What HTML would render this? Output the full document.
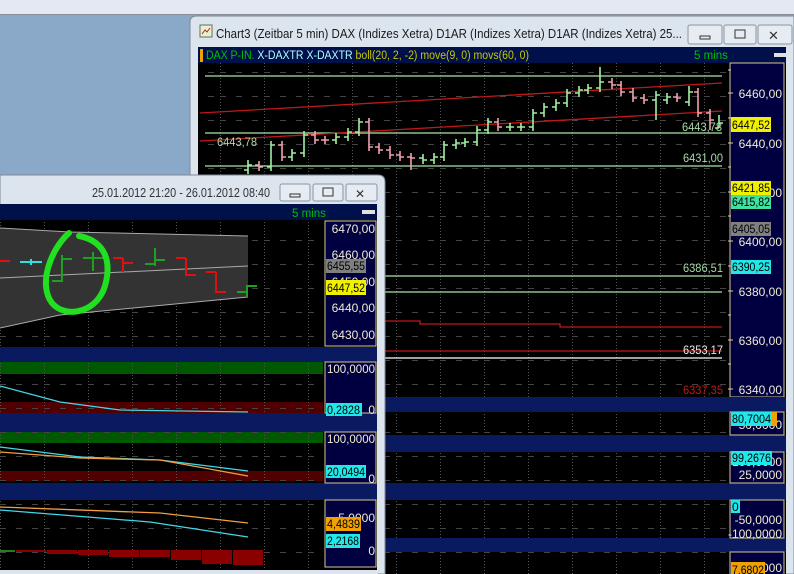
<!DOCTYPE html>
<html><head><meta charset="utf-8"><style>
html,body{margin:0;padding:0;width:794px;height:574px;overflow:hidden;background:#8aa8c8}
svg{display:block;font-family:"Liberation Sans",sans-serif}
</style></head><body>
<svg width="794" height="574" viewBox="0 0 794 574" xmlns="http://www.w3.org/2000/svg">
<defs>
<pattern id="g" x="0" y="0" width="44" height="24" patternUnits="userSpaceOnUse">
<line x1="0.5" y1="0" x2="0.5" y2="24" stroke="#555" stroke-dasharray="1,2"/>
<line x1="0" y1="0.5" x2="44" y2="0.5" stroke="#444" stroke-dasharray="6,10"/>
</pattern>
</defs>
<rect x="0" y="0" width="794" height="14" fill="#e4e8f2"/>
<rect x="0" y="14" width="794" height="1" fill="#8a8e96"/>
<rect x="0" y="15" width="794" height="559" fill="#8aa8c8"/>

<!-- MAIN WINDOW -->
<path d="M190,574 V22 Q190,16 197,16 H794 V574 Z" fill="#dce4ee" stroke="#7d8a98"/>
<rect x="200" y="25" width="12" height="12" fill="#e8f0d0" stroke="#607060"/>
<path d="M202,34 l3,-4 l2,2 l3,-4" stroke="#c02020" fill="none"/>
<text x="216" y="38" font-size="12.5" fill="#1a1a1a" textLength="466" lengthAdjust="spacingAndGlyphs">Chart3 (Zeitbar 5 min)  DAX (Indizes Xetra) D1AR (Indizes Xetra) D1AR (Indizes Xetra) 25...</text>
<rect x="688" y="25" width="34" height="19" rx="2" fill="#e6ecf2" stroke="#8a96a4"/>
<rect x="700" y="36" width="10" height="3" fill="none" stroke="#333"/>
<rect x="724" y="25" width="32" height="19" rx="2" fill="#e6ecf2" stroke="#8a96a4"/>
<rect x="735" y="30" width="10" height="8" fill="none" stroke="#333"/>
<rect x="758" y="25" width="34" height="19" rx="2" fill="#e6ecf2" stroke="#8a96a4"/>
<text x="768" y="40" font-size="13" fill="#333">✕</text>

<rect x="198" y="47" width="588" height="527" fill="#000"/>
<rect x="198" y="47" width="588" height="16" fill="#00104a"/>
<rect x="200" y="49" width="3" height="13" fill="#f0a000"/>
<text x="206" y="59" font-size="11.5" textLength="323" lengthAdjust="spacingAndGlyphs"><tspan fill="#00c000">DAX P-IN. </tspan><tspan fill="#b0ffff">X-DAXTR X-DAXTR </tspan><tspan fill="#c8c800">boll(20, 2, -2) move(9, 0) movs(60, 0)</tspan></text>
<text x="694" y="59" font-size="11.5" fill="#00c000">5 mins</text>
<rect x="774" y="53" width="12" height="4" fill="#e0e0e0"/>

<rect x="198" y="63" width="532" height="334" fill="url(#g)"/>
<g stroke-width="1.3" fill="none">
<line x1="205" y1="76" x2="722" y2="76" stroke="#a8e8a8"/>
<line x1="205" y1="133" x2="722" y2="133" stroke="#a8e8a8"/>
<line x1="205" y1="166" x2="722" y2="166" stroke="#a8e8a8"/>
<line x1="200" y1="113" x2="722" y2="83" stroke="#c01818"/>
<line x1="200" y1="141" x2="722" y2="111" stroke="#c01818"/>
<line x1="200" y1="276" x2="722" y2="276" stroke="#a8e8a8"/>
<line x1="200" y1="292" x2="722" y2="292" stroke="#a8e8a8"/>
<path d="M200,321 H420 V324 H560 V327 H722" stroke="#c01818"/>
<line x1="200" y1="351" x2="722" y2="351" stroke="#c01818"/>
<line x1="200" y1="358" x2="722" y2="358" stroke="#fff"/>
</g>
<g stroke-width="1.6" fill="none">
<path stroke="#a0f0a0" d="M248,160V174M244,170H248M248,165H252 M271,141V171M267,167H271M271,145H275 M292,149V161M288,157H292M292,153H296 M304,131V157M300,153H304M304,135H308 M336,133V144M332,140H336M336,137H340 M348,128V141M344,137H348M348,132H352 M359,118V136M355,132H359M359,122H363 M423,154V164M419,158H423M423,160H427 M434,153V164M430,160H434M434,157H438 M444,141V161M440,157H444M444,145H448 M456,139V149M452,145H456M456,143H460 M465,138V147M461,143H465M465,142H469 M477,126V146M473,142H477M477,130H481 M488,118V134M484,130H488M488,122H492 M510,123V131M506,127H510M510,127H514 M521,123V131M517,127H521M521,127H525 M533,109V131M529,127H533M533,113H537 M544,103V117M540,113H544M544,107H548 M556,99V111M552,107H556M556,103H560 M567,89V107M563,103H567M567,93H571 M579,86V97M575,93H579M579,90H583 M588,84V94M584,90H588M588,88H592 M600,67V92M596,88H600M600,82H604 M656,91V120M652,100H656M656,95H660 M667,93V104M663,100H667M667,97H671 M689,86V106M685,102H689M689,92H693 M719,115V128M715,128H719M719,123H723"/>
<path stroke="#f0a0b0" d="M259,161V171M255,165H259M259,167H263 M282,141V161M278,145H282M282,157H286 M315,131V144M311,135H315M315,140H319 M325,136V144M321,140H325M325,140H329 M369,118V151M365,122H369M369,147H373 M379,143V154M375,147H379M379,150H383 M390,146V159M386,150H390M390,155H394 M400,151V161M396,155H400M400,157H404 M411,153V170M407,157H411M411,158H415 M498,118V131M494,122H498M498,127H502 M612,78V89M608,82H612M612,85H616 M621,81V96M617,85H621M621,92H625 M633,88V102M629,92H633M633,98H637 M644,94V104M640,98H644M644,100H648 M677,93V102M673,97H677M677,98H681 M698,88V117M694,92H698M698,113H702 M710,109V130M706,113H710M710,120H714"/>
</g>
<g font-size="11.5" fill="#a8d8a8">
<text x="217" y="146" textLength="40" lengthAdjust="spacingAndGlyphs">6443,78</text>
<text x="682" y="131" textLength="40" lengthAdjust="spacingAndGlyphs">6443,78</text>
<text x="683" y="162" textLength="40" lengthAdjust="spacingAndGlyphs">6431,00</text>
<text x="683" y="272" textLength="40" lengthAdjust="spacingAndGlyphs">6386,51</text>
<text x="683" y="354" fill="#e8e8e8" textLength="40" lengthAdjust="spacingAndGlyphs">6353,17</text>
<text x="683" y="394" fill="#c01818" textLength="40" lengthAdjust="spacingAndGlyphs">6337,35</text>
</g>
<rect x="730" y="63" width="54" height="334" fill="#000040" stroke="#d8c890"/>
<g stroke="#e0d090"><path d="M728,70h3M728,93h5M728,118h3M728,143h5M728,167h3M728,192h5M728,216h3M728,241h5M728,266h3M728,291h5M728,315h3M728,340h5M728,364h3M728,389h5"/></g>
<g font-size="12" fill="#f0ead0" text-anchor="end">
<text x="782" y="98">6460,00</text><text x="782" y="148">6440,00</text><text x="782" y="197">6420,00</text>
<text x="782" y="246">6400,00</text><text x="782" y="296">6380,00</text><text x="782" y="345">6360,00</text><text x="782" y="394">6340,00</text>
</g>
<g font-size="12">
<rect x="731" y="117" width="40" height="15" fill="#f0f000"/><text x="732" y="129" textLength="38" lengthAdjust="spacingAndGlyphs">6447,52</text>
<rect x="731" y="181" width="40" height="14" fill="#f0f000"/><text x="732" y="192" textLength="38" lengthAdjust="spacingAndGlyphs">6421,85</text>
<rect x="731" y="195" width="40" height="14" fill="#40e0a0"/><text x="732" y="206" textLength="38" lengthAdjust="spacingAndGlyphs">6415,82</text>
<rect x="731" y="222" width="40" height="14" fill="#808080"/><text x="732" y="233" textLength="38" lengthAdjust="spacingAndGlyphs">6405,05</text>
<rect x="731" y="260" width="40" height="14" fill="#20e8e8"/><text x="732" y="271" textLength="38" lengthAdjust="spacingAndGlyphs">6390,25</text>
</g>
<rect x="198" y="397" width="588" height="15" fill="#0a1a60"/>
<rect x="198" y="435" width="588" height="17" fill="#0a1a60"/>
<rect x="198" y="483" width="588" height="17" fill="#0a1a60"/>
<rect x="198" y="538" width="588" height="14" fill="#0a1a60"/>
<rect x="198" y="412" width="532" height="23" fill="url(#g)"/>
<rect x="198" y="452" width="532" height="31" fill="url(#g)"/>
<rect x="198" y="500" width="532" height="38" fill="url(#g)"/>
<rect x="198" y="552" width="532" height="22" fill="url(#g)"/>
<g fill="#000040" stroke="#d8c890">
<rect x="730" y="412" width="54" height="23"/><rect x="730" y="452" width="54" height="31"/>
<rect x="730" y="500" width="54" height="38"/><rect x="730" y="552" width="54" height="24"/>
</g>
<g font-size="12" fill="#f0ead0" text-anchor="end">
<text x="782" y="429">50,0000</text><text x="782" y="466">100,0000</text><text x="782" y="479">25,0000</text>
<text x="782" y="524">-50,0000</text><text x="782" y="538">-100,0000</text><text x="782" y="572">7,0000</text>
</g>
<g font-size="12">
<rect x="731" y="412" width="41" height="14" fill="#20e8e8"/><text x="732" y="423" textLength="39" lengthAdjust="spacingAndGlyphs">80,7004</text><rect x="772" y="412" width="5" height="14" fill="#f0a000"/>
<rect x="731" y="451" width="41" height="14" fill="#20e8e8"/><text x="732" y="462" textLength="39" lengthAdjust="spacingAndGlyphs">99,2676</text>
<rect x="731" y="500" width="9" height="13" fill="#20e8e8"/><text x="732" y="511">0</text>
<rect x="731" y="562" width="34" height="12" fill="#f0a000"/><text x="732" y="574" textLength="32" lengthAdjust="spacingAndGlyphs">7,6802</text>
</g>

<!-- LEFT WINDOW -->
<path d="M0,175 H378 Q385,175 385,182 V574 H0 Z" fill="#dce4ee" stroke="#7d8a98"/>
<text x="92" y="197" font-size="12.5" fill="#333" textLength="178" lengthAdjust="spacingAndGlyphs">25.01.2012 21:20 - 26.01.2012 08:40</text>
<rect x="280" y="184" width="30" height="17" rx="2" fill="#e6ecf2" stroke="#8a96a4"/>
<rect x="290" y="194" width="10" height="3" fill="none" stroke="#333"/>
<rect x="313" y="184" width="30" height="17" rx="2" fill="#e6ecf2" stroke="#8a96a4"/>
<rect x="323" y="188" width="10" height="8" fill="none" stroke="#333"/>
<rect x="346" y="184" width="31" height="17" rx="2" fill="#e6ecf2" stroke="#8a96a4"/>
<text x="355" y="198" font-size="12" fill="#333">✕</text>
<rect x="0" y="204" width="377" height="366" fill="#000"/>
<rect x="0" y="204" width="377" height="16" fill="#00104a"/>
<text x="292" y="217" font-size="11.5" fill="#00c000">5 mins</text>
<rect x="362" y="210" width="13" height="4" fill="#e0e0e0"/>
<rect x="0" y="220" width="323" height="127" fill="url(#g)"/>
<path d="M0,228 L70,232 L248,236 L248,297 L60,315 L0,328 Z" fill="#333"/>
<path d="M0,228 L70,232 L248,236 M248,297 L60,315 L0,328 M0,278 L248,266" stroke="#aaa" fill="none"/>
<g stroke-width="2" fill="none">
<path stroke="#e01010" d="M0,261H10 M123,258V272M113,258H123M123,263H133 M186,258V276M176,258H186M186,275H196 M216,272V293M206,272H216M216,292H226"/>
<path stroke="#30e0e0" d="M20,262H42M31,259V265"/>
<path stroke="#20a020" d="M62,255V282M52,281H62M62,259H72 M93,252V271M83,258H93M93,258H103 M155,248V266M145,264H155M155,260H165 M247,285V296M237,292H247M247,286H257"/>
</g>
<path d="M69,233 C50,250 38,285 52,303 C66,320 100,312 106,282 C112,255 100,240 79,236" stroke="#20e020" stroke-width="6" fill="none" stroke-linecap="round"/>
<rect x="325" y="221" width="51" height="125" fill="#000040" stroke="#d8c890"/>
<g font-size="12" fill="#f0ead0" text-anchor="end">
<text x="375" y="233">6470,00</text><text x="375" y="259">6460,00</text><text x="375" y="286">6450,00</text>
<text x="375" y="312">6440,00</text><text x="375" y="339">6430,00</text>
</g>
<g font-size="12">
<rect x="326" y="259" width="40" height="14" fill="#808080"/><text x="327" y="270" textLength="38" lengthAdjust="spacingAndGlyphs">6455,55</text>
<rect x="326" y="280" width="40" height="15" fill="#f0f000"/><text x="327" y="292" textLength="38" lengthAdjust="spacingAndGlyphs">6447,52</text>
</g>
<rect x="0" y="347" width="377" height="15" fill="#0a1a60"/>
<rect x="0" y="413" width="377" height="19" fill="#0a1a60"/>
<rect x="0" y="483" width="377" height="17" fill="#0a1a60"/>
<rect x="0" y="362" width="323" height="12" fill="#005800"/>
<rect x="0" y="402" width="323" height="11" fill="#500000"/>
<rect x="0" y="432" width="323" height="11" fill="#005800"/>
<rect x="0" y="471" width="323" height="10" fill="#500000"/>
<rect x="0" y="362" width="323" height="51" fill="url(#g)"/>
<rect x="0" y="432" width="323" height="51" fill="url(#g)"/>
<rect x="0" y="500" width="323" height="70" fill="url(#g)"/>
<path d="M0,386 L60,402 L120,410 L248,412" stroke="#40d8e8" fill="none" stroke-width="1.3"/>
<path d="M0,447 L80,457 L160,460 L248,471" stroke="#40d8e8" fill="none" stroke-width="1.3"/>
<path d="M0,452 L80,458 L160,460 L248,476" stroke="#f0a040" fill="none" stroke-width="1.3"/>
<path d="M0,507 L160,513 L248,523" stroke="#f0a040" fill="none" stroke-width="1.3"/>
<path d="M0,510 L150,522 L248,537" stroke="#40d8e8" fill="none" stroke-width="1.3"/>
<rect x="0" y="550" width="15" height="2" fill="#208020"/>
<g fill="#8a0000">
<rect x="16" y="550" width="30" height="2"/><rect x="47" y="550" width="30" height="4"/><rect x="78" y="550" width="30" height="5"/>
<rect x="109" y="550" width="30" height="7"/><rect x="140" y="550" width="30" height="7"/><rect x="171" y="550" width="30" height="10"/>
<rect x="202" y="550" width="30" height="14"/><rect x="233" y="550" width="30" height="15"/>
</g>
<g fill="#000040" stroke="#d8c890">
<rect x="325" y="362" width="51" height="51"/><rect x="325" y="432" width="51" height="51"/><rect x="325" y="500" width="51" height="67"/>
</g>
<g font-size="12" fill="#f0ead0" text-anchor="end">
<text x="375" y="373" textLength="48" lengthAdjust="spacingAndGlyphs">100,0000</text><text x="375" y="414">0</text>
<text x="375" y="443" textLength="48" lengthAdjust="spacingAndGlyphs">100,0000</text><text x="375" y="483">0</text>
<text x="375" y="522">5,0000</text><text x="375" y="555">0</text>
</g>
<g font-size="12">
<rect x="326" y="403" width="36" height="13" fill="#20e8e8"/><text x="327" y="414" textLength="33" lengthAdjust="spacingAndGlyphs">0,2828</text>
<rect x="326" y="470" width="40" height="8" fill="#f0a000"/>
<rect x="326" y="465" width="40" height="12" fill="#20e8e8"/><text x="327" y="476" textLength="38" lengthAdjust="spacingAndGlyphs">20,0494</text>
<rect x="326" y="517" width="35" height="14" fill="#f0a000"/><text x="327" y="528" textLength="33" lengthAdjust="spacingAndGlyphs">4,4839</text>
<rect x="326" y="534" width="34" height="14" fill="#20e8e8"/><text x="327" y="545" textLength="32" lengthAdjust="spacingAndGlyphs">2,2168</text>
</g>
<rect x="0" y="570" width="378" height="4" fill="#dce4ee"/>
</svg>
</body></html>
